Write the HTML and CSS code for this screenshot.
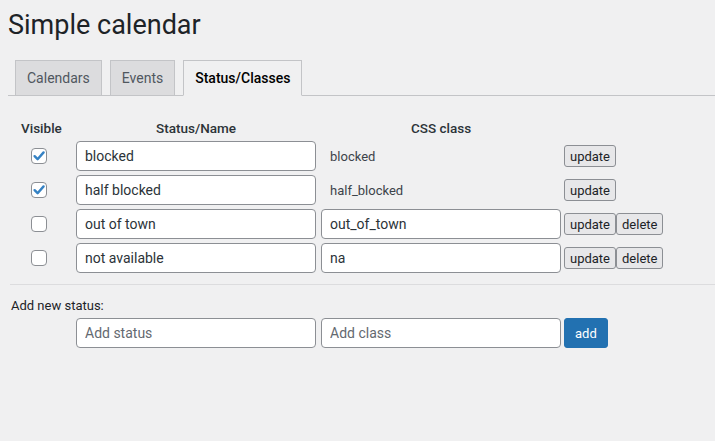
FILE: index.html
```html
<!DOCTYPE html>
<html>
<head>
<meta charset="utf-8">
<link rel="stylesheet" href="styles.css">
</head>
<body>
<div class="wrap">
  <h1 class="title">Simple calendar</h1>
  <nav class="tabs">
    <a class="tab">Calendars</a>
    <a class="tab">Events</a>
    <a class="tab active">Status/Classes</a>
  </nav>
  <div class="grid">
    <div class="th th-vis">Visible</div>
    <div class="th th-c">Status/Name</div>
    <div class="th th-c">CSS class</div>
    <div class="th"></div>

    <div class="cell"><span class="cb checked"><svg viewBox="0 0 16 16" width="16" height="16"><path d="M3.6 8.2 L6.6 11.2 L12.6 4.4" fill="none" stroke="#3582c4" stroke-width="2.4" stroke-linecap="round" stroke-linejoin="round"/></svg></span></div>
    <div class="cell"><input class="field" type="text" value="blocked"></div>
    <div class="cell"><span class="static">blocked</span></div>
    <div class="cell btns"><button class="btn">update</button></div>

    <div class="cell"><span class="cb checked"><svg viewBox="0 0 16 16" width="16" height="16"><path d="M3.6 8.2 L6.6 11.2 L12.6 4.4" fill="none" stroke="#3582c4" stroke-width="2.4" stroke-linecap="round" stroke-linejoin="round"/></svg></span></div>
    <div class="cell"><input class="field" type="text" value="half blocked"></div>
    <div class="cell"><span class="static">half_blocked</span></div>
    <div class="cell btns"><button class="btn">update</button></div>

    <div class="cell"><span class="cb"></span></div>
    <div class="cell"><input class="field" type="text" value="out of town"></div>
    <div class="cell"><input class="field" type="text" value="out_of_town"></div>
    <div class="cell btns"><button class="btn">update</button><button class="btn">delete</button></div>

    <div class="cell"><span class="cb"></span></div>
    <div class="cell"><input class="field" type="text" value="not available"></div>
    <div class="cell"><input class="field" type="text" value="na"></div>
    <div class="cell btns"><button class="btn">update</button><button class="btn">delete</button></div>
  </div>
  <hr class="sep">
  <div class="add-label">Add new status:</div>
  <div class="add-row">
    <input class="field" type="text" placeholder="Add status">
    <input class="field" type="text" placeholder="Add class">
    <button class="btn-primary">add</button>
  </div>
</div>
</body>
</html>
```
FILE: styles.css
```css
html, body {
  margin: 0;
  padding: 0;
  background: #f0f0f1;
  font-family: Roboto, "Liberation Sans", sans-serif;
  color: #3c434a;
}
.wrap {
  padding: 0 0 0 8px;
}
.title {
  margin: 0;
  padding: 8px 0 0 0;
  font-size: 27px;
  font-weight: 400;
  line-height: 34px;
  color: #1d2327;
}
.tabs {
  display: flex;
  gap: 8px;
  margin-top: 18px;
  padding-left: 7px;
  border-bottom: 1px solid #c3c4c7;
  height: 35px;
  align-items: flex-end;
}
.tab {
  display: block;
  box-sizing: border-box;
  height: 36px;
  margin-bottom: -1px;
  padding: 0 11px;
  font-size: 14px;
  font-weight: 400;
  line-height: 34px;
  color: #50575e;
  background: #dcdcde;
  border: 1px solid #c3c4c7;
}
.tab.active {
  background: #f0f0f1;
  color: #000;
  font-weight: 500;
  border-bottom-color: #f0f0f1;
}
.grid {
  display: grid;
  grid-template-columns: 62px 245px 243px auto;
  row-gap: 4px;
  margin-top: 19px;
  margin-left: 6px;
}
.th {
  box-sizing: border-box;
  height: 22px;
  padding-top: 3px;
  font-size: 13.5px;
  font-weight: 500;
  line-height: 20px;
  color: #2c3338;
}
.th-vis {
  padding-left: 7px;
}
.th-c {
  text-align: center;
  width: 240px;
}
.cell {
  display: flex;
  align-items: center;
  height: 30px;
}
.cb {
  display: block;
  box-sizing: border-box;
  width: 16px;
  height: 16px;
  margin-left: 17px;
  background: #fff;
  border: 1px solid #8c8f94;
  border-radius: 4px;
  position: relative;
}
.cb svg {
  position: absolute;
  left: -1px;
  top: -1px;
}
.field {
  box-sizing: border-box;
  width: 240px;
  height: 30px;
  margin: 0;
  padding: 0 8px;
  background: #fff;
  border: 1px solid #8c8f94;
  border-radius: 4px;
  font-family: Roboto, "Liberation Sans", sans-serif;
  font-size: 14px;
  color: #2c3338;
}
.field::placeholder {
  color: #646970;
}
.static {
  padding-left: 9px;
  font-size: 13px;
  color: #3c434a;
}
.btns {
  gap: 0;
}
.btn {
  box-sizing: border-box;
  height: 22px;
  margin: 0;
  padding: 0 5px;
  background: #e7e7e9;
  border: 1px solid #8c8f94;
  border-radius: 3px;
  font-family: Roboto, "Liberation Sans", sans-serif;
  font-size: 13px;
  color: #1d2327;
}
.sep {
  margin: 11px 0 0 2px;
  border: 0;
  border-top: 1px solid #dcdcde;
  height: 0;
}
.add-label {
  margin: 13px 0 0 3px;
  font-size: 13px;
  line-height: 16px;
  color: #1d2327;
}
.add-row {
  display: flex;
  gap: 5px;
  margin: 4px 0 0 68px;
}
.add-row .btn-primary {
  margin-left: -2px;
}
.btn-primary {
  box-sizing: border-box;
  height: 30px;
  padding: 0 10px;
  background: #2271b1;
  border: 1px solid #2271b1;
  border-radius: 3px;
  color: #fff;
  font-family: Roboto, "Liberation Sans", sans-serif;
  font-size: 13px;
}
```
